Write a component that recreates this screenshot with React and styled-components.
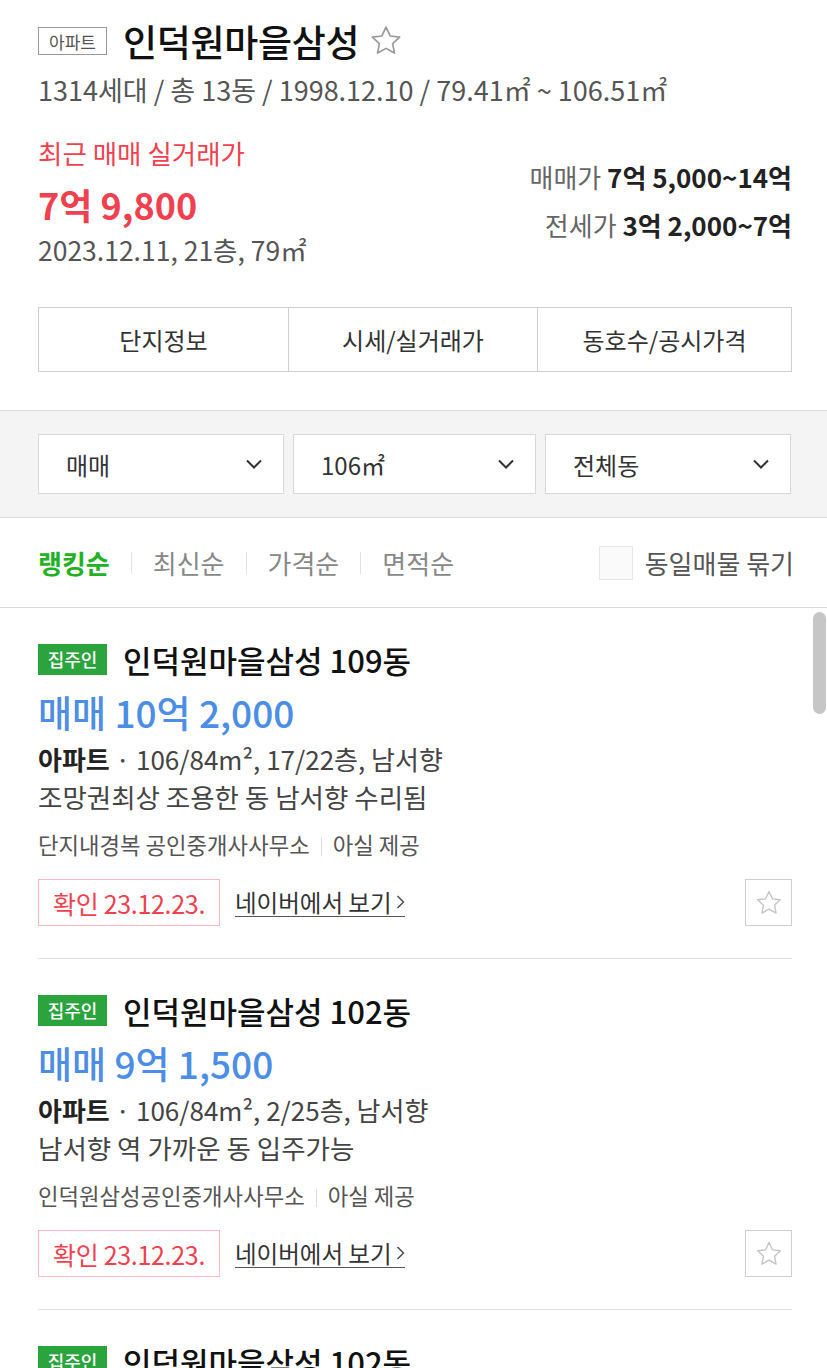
import React from "react";
import styled, { createGlobalStyle, css } from "styled-components";

const GlobalStyle = createGlobalStyle`
  html, body {
    margin: 0;
    padding: 0;
    background: #fff;
  }
  body {
    font-family: "Noto Sans CJK KR", "Noto Sans", sans-serif;
    color: #222;
  }
  * {
    box-sizing: border-box;
  }
`;

const palette = {
  red: "#ef4150",
  blue: "#4c8de6",
  green: "#2ba43d",
  greenText: "#22b024",
  line: "#dcdcdc",
  sub: "#555",
};

const Page = styled.div`
  position: relative;
  width: 827px;
  height: 1368px;
  overflow: hidden;
`;

const Header = styled.section`
  padding: 20px 35px 38px 38px;
`;

const TitleRow = styled.div`
  display: flex;
  align-items: center;
  height: 42px;
`;

const TypeBadge = styled.span`
  display: inline-flex;
  align-items: center;
  justify-content: center;
  width: 69px;
  height: 28px;
  border: 1px solid #999;
  font-size: 17px;
  color: #555;
  margin-right: 16px;
`;

const Title = styled.h1`
  margin: 0;
  font-size: 37px;
  font-weight: 500;
  color: #111;
  letter-spacing: -0.3px;
`;

const StarButton = styled.span`
  display: inline-flex;
  margin-left: 9px;
  color: #aaa;
`;

const Meta = styled.div`
  margin-top: 13px;
  font-size: 27px;
  line-height: 30px;
  color: ${palette.sub};
`;

const Summary = styled.div`
  display: flex;
  justify-content: space-between;
  margin-top: 33px;
`;

const RecentLabel = styled.div`
  font-size: 26.5px;
  line-height: 30px;
  color: ${palette.red};
`;

const RecentPrice = styled.div`
  margin-top: 14px;
  font-size: 36px;
  line-height: 44px;
  font-weight: 700;
  color: ${palette.red};
`;

const RecentDate = styled.div`
  margin-top: 9px;
  font-size: 26.5px;
  line-height: 30px;
  color: ${palette.sub};
`;

const PriceRanges = styled.div`
  padding-top: 24px;
  display: flex;
  flex-direction: column;
  align-items: flex-end;
  gap: 18px;
`;

const RangeLine = styled.div`
  font-size: 26px;
  line-height: 30px;
  color: #666;
  b {
    color: #222;
    font-weight: 700;
  }
`;

const Tabs = styled.div`
  display: grid;
  grid-template-columns: 249px 249px 1fr;
  margin-top: 42px;
  height: 65px;
  border: 1px solid #cfcfcf;
`;

const Tab = styled.div`
  display: flex;
  align-items: center;
  justify-content: center;
  font-size: 24px;
  color: #333;
  & + & {
    border-left: 1px solid #cfcfcf;
  }
`;

const FilterBar = styled.div`
  display: grid;
  grid-template-columns: 246px 243px 246px;
  gap: 9px;
  padding: 23px 35px 23px 38px;
  background: #f4f4f4;
  border-top: 1px solid ${palette.line};
  border-bottom: 1px solid ${palette.line};
`;

const Select = styled.div`
  display: flex;
  align-items: center;
  justify-content: space-between;
  height: 60px;
  padding: 0 20px 0 27px;
  background: #fff;
  border: 1px solid #d8d8d8;
  font-size: 24px;
  color: #333;
`;

const SortBar = styled.div`
  display: flex;
  align-items: center;
  justify-content: space-between;
  height: 90px;
  padding: 0 33px 0 38px;
  border-bottom: 1px solid ${palette.line};
`;

const SortList = styled.div`
  display: flex;
  align-items: center;
`;

const SortItem = styled.span`
  font-size: 26px;
  color: #888;
  ${(p) =>
    p.$active &&
    css`
      color: ${palette.greenText};
      font-weight: 700;
    `}
`;

const SortDivider = styled.i`
  width: 1px;
  height: 22px;
  background: #e2e2e2;
  margin: 0 21px;
`;

const CheckLabel = styled.label`
  display: flex;
  align-items: center;
  gap: 12px;
  font-size: 26px;
  color: #555;
`;

const CheckBox = styled.span`
  width: 34px;
  height: 34px;
  border: 1px solid #e6e6e6;
  background: #fafafa;
`;

const List = styled.div`
  padding: 0 35px 0 38px;
`;

const Item = styled.article`
  padding: 35px 0 32px;
  border-bottom: 1px solid #e2e2e2;
`;

const ItemTitleRow = styled.div`
  display: flex;
  align-items: center;
  height: 32px;
`;

const OwnerBadge = styled.span`
  display: inline-flex;
  align-items: center;
  justify-content: center;
  width: 69px;
  height: 31px;
  background: ${palette.green};
  color: #fff;
  font-size: 18px;
  font-weight: 500;
  margin-right: 16px;
`;

const ItemTitle = styled.h2`
  margin: 0;
  font-size: 31px;
  font-weight: 500;
  color: #111;
`;

const ItemPrice = styled.div`
  margin-top: 17px;
  font-size: 37px;
  line-height: 40px;
  font-weight: 500;
  color: ${palette.blue};
`;

const Spec = styled.div`
  margin-top: 10px;
  font-size: 26px;
  line-height: 34px;
  color: #444;
  b {
    color: #222;
    font-weight: 700;
  }
`;

const Desc = styled.div`
  margin-top: 4px;
  font-size: 26.5px;
  line-height: 34px;
  color: #444;
`;

const Agent = styled.div`
  margin-top: 15px;
  font-size: 22.3px;
  line-height: 30px;
  color: #555;
`;

const AgentDivider = styled.i`
  display: inline-block;
  width: 1px;
  height: 18px;
  background: #ddd;
  margin: 0 11px;
  vertical-align: -2px;
`;

const ItemFooter = styled.div`
  display: flex;
  align-items: center;
  margin-top: 20px;
  height: 47px;
`;

const Confirm = styled.span`
  display: inline-flex;
  align-items: center;
  justify-content: center;
  width: 182px;
  height: 47px;
  border: 1px solid #f6b9bf;
  color: ${palette.red};
  font-size: 25px;
  letter-spacing: -0.3px;
`;

const NaverLink = styled.a`
  display: inline-flex;
  align-items: center;
  gap: 4px;
  margin-left: 15px;
  font-size: 23.5px;
  color: #333;
  text-decoration: none;
  border-bottom: 1px solid #555;
  line-height: 28px;
`;

const FavButton = styled.span`
  margin-left: auto;
  display: inline-flex;
  align-items: center;
  justify-content: center;
  width: 47px;
  height: 47px;
  border: 1px solid #cfcfcf;
`;

const Scrollbar = styled.div`
  position: absolute;
  right: 1px;
  top: 612px;
  width: 13px;
  height: 102px;
  border-radius: 7px;
  background: #c6c6c6;
`;

const StarIcon = ({ size = 32, color = "#aaa" }) => (
  <svg width={size} height={size} viewBox="0 0 24 24" fill="none">
    <path
      d="M12 2.8l2.75 5.85 6.35.75-4.7 4.35 1.25 6.3L12 16.9l-5.65 3.15 1.25-6.3-4.7-4.35 6.35-.75z"
      stroke={color}
      strokeWidth="1.1"
      strokeLinejoin="round"
    />
  </svg>
);

const Chevron = () => (
  <svg width="18" height="12" viewBox="0 0 18 12" fill="none">
    <path d="M2 2.5l7 7 7-7" stroke="#333" strokeWidth="2" />
  </svg>
);

const SmallChevron = () => (
  <svg width="9" height="16" viewBox="0 0 9 16" fill="none">
    <path d="M1.5 2l6 6-6 6" stroke="#444" strokeWidth="1.4" />
  </svg>
);

const listings = [
  {
    title: "인덕원마을삼성 109동",
    price: "매매 10억 2,000",
    spec: "106/84m², 17/22층, 남서향",
    desc: "조망권최상 조용한 동 남서향 수리됨",
    agent: "단지내경복 공인중개사사무소",
  },
  {
    title: "인덕원마을삼성 102동",
    price: "매매 9억 1,500",
    spec: "106/84m², 2/25층, 남서향",
    desc: "남서향 역 가까운 동 입주가능",
    agent: "인덕원삼성공인중개사사무소",
  },
  {
    title: "인덕원마을삼성 102동",
    price: "매매 9억 3,000",
    spec: "106/84m², 12/25층, 남서향",
    desc: "올수리 입주가능",
    agent: "인덕원삼성공인중개사사무소",
  },
];

const sorts = ["랭킹순", "최신순", "가격순", "면적순"];

const App = () => {
  return (
    <Page>
      <GlobalStyle />
      <Header>
        <TitleRow>
          <TypeBadge>아파트</TypeBadge>
          <Title>인덕원마을삼성</Title>
          <StarButton>
            <StarIcon size={36} color="#9a9a9a" />
          </StarButton>
        </TitleRow>
        <Meta>1314세대 / 총 13동 / 1998.12.10 / 79.41㎡ ~ 106.51㎡</Meta>

        <Summary>
          <div>
            <RecentLabel>최근 매매 실거래가</RecentLabel>
            <RecentPrice>7억 9,800</RecentPrice>
            <RecentDate>2023.12.11, 21층, 79㎡</RecentDate>
          </div>
          <PriceRanges>
            <RangeLine>
              매매가 <b>7억 5,000~14억</b>
            </RangeLine>
            <RangeLine>
              전세가 <b>3억 2,000~7억</b>
            </RangeLine>
          </PriceRanges>
        </Summary>

        <Tabs>
          <Tab>단지정보</Tab>
          <Tab>시세/실거래가</Tab>
          <Tab>동호수/공시가격</Tab>
        </Tabs>
      </Header>

      <FilterBar>
        <Select>
          매매 <Chevron />
        </Select>
        <Select>
          106㎡ <Chevron />
        </Select>
        <Select>
          전체동 <Chevron />
        </Select>
      </FilterBar>

      <SortBar>
        <SortList>
          {sorts.map((s, i) => (
            <React.Fragment key={s}>
              {i > 0 && <SortDivider />}
              <SortItem $active={i === 0}>{s}</SortItem>
            </React.Fragment>
          ))}
        </SortList>
        <CheckLabel>
          <CheckBox />
          동일매물 묶기
        </CheckLabel>
      </SortBar>

      <List>
        {listings.map((item, i) => (
          <Item key={i}>
            <ItemTitleRow>
              <OwnerBadge>집주인</OwnerBadge>
              <ItemTitle>{item.title}</ItemTitle>
            </ItemTitleRow>
            <ItemPrice>{item.price}</ItemPrice>
            <Spec>
              <b>아파트</b> · {item.spec}
            </Spec>
            <Desc>{item.desc}</Desc>
            <Agent>
              {item.agent}
              <AgentDivider />
              아실 제공
            </Agent>
            <ItemFooter>
              <Confirm>확인 23.12.23.</Confirm>
              <NaverLink href="#">
                네이버에서 보기 <SmallChevron />
              </NaverLink>
              <FavButton>
                <StarIcon size={30} color="#c4c4c4" />
              </FavButton>
            </ItemFooter>
          </Item>
        ))}
      </List>

      <Scrollbar />
    </Page>
  );
};

export default App;
